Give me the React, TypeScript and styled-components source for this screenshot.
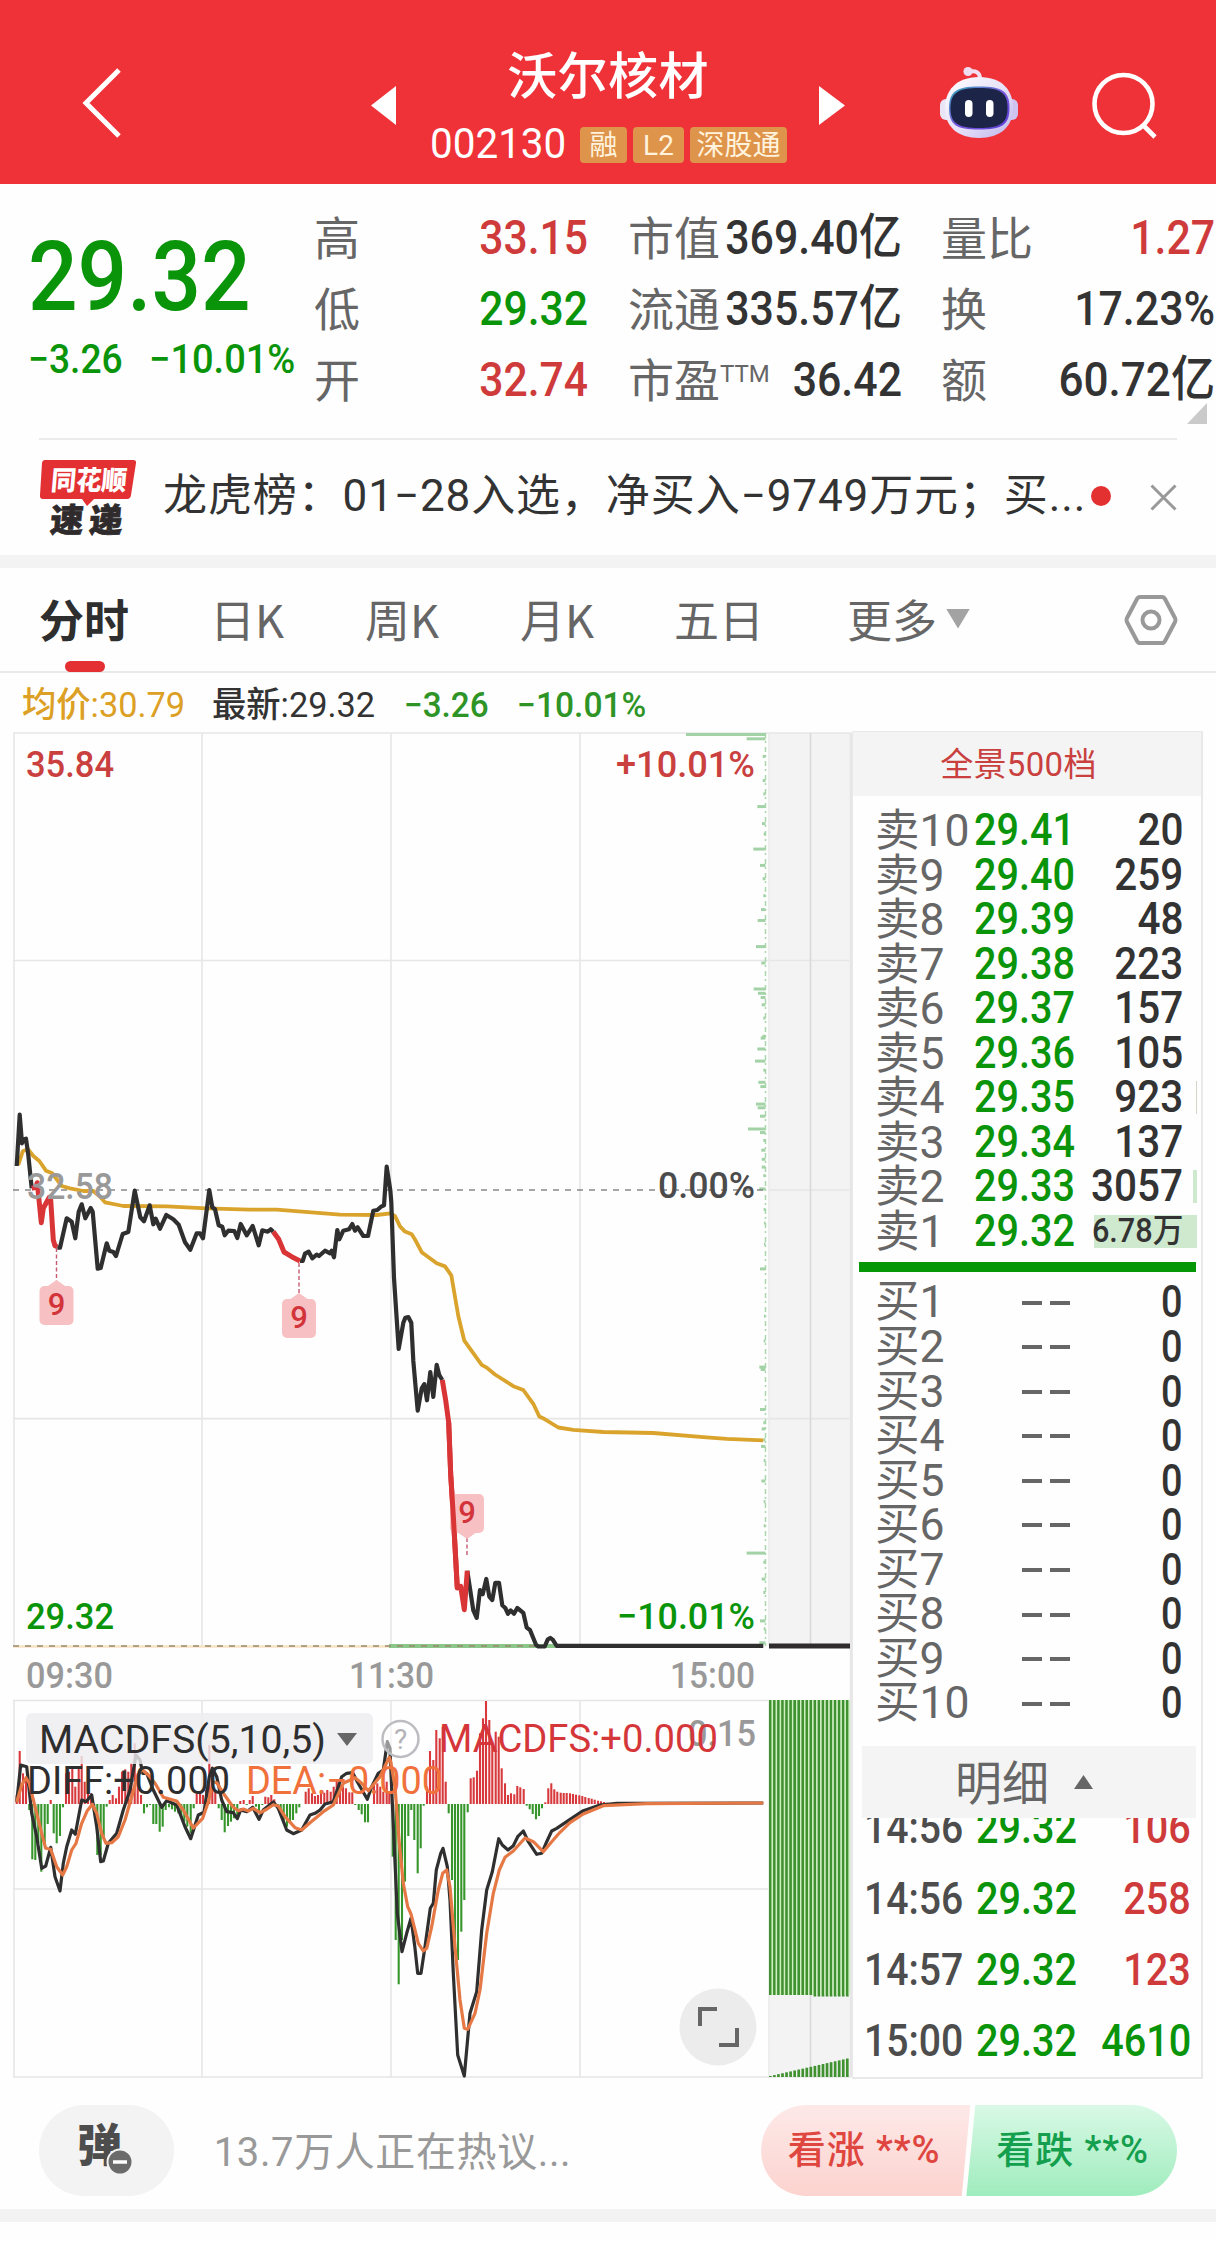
import React from "react";
import styled, { createGlobalStyle } from "styled-components";

const RED = "#c9403e";
const GREEN = "#0a940a";
const INK = "#333333";
const MUTE = "#666666";
const FONT = 'Roboto, "Noto Sans CJK SC", sans-serif';
const CJK = '"Noto Sans CJK SC", sans-serif';

const Global = createGlobalStyle`
  * { box-sizing: border-box; }
  body { margin: 0; background: #fff; font-family: ${FONT}; }
`;

const Page = styled.div`
  width: 1216px;
  height: 2241px;
  overflow: hidden;
  background: #fefefe;
  display: flex;
  flex-direction: column;
`;

/* Condensed figures, squeezed towards the side they are aligned to. */
const Figure = styled.span<{
  $size: number;
  $color?: string;
  $squeeze?: number;
  $from?: string;
  $weight?: number;
}>`
  display: inline-block;
  white-space: nowrap;
  font-size: ${(p) => p.$size}px;
  font-weight: ${(p) => p.$weight ?? 500};
  color: ${(p) => p.$color ?? INK};
  transform: scaleX(${(p) => p.$squeeze ?? 0.92});
  transform-origin: ${(p) => p.$from ?? "left"} center;
`;

/* ---------- header ---------- */
const Header = styled.header`
  height: 184px;
  flex: none;
  background: #ef3138;
  display: grid;
  grid-template-columns: 365px 486px 365px;
  color: #fff;
`;
const HeaderSide = styled.div<{ $left: number; $top: number; $gap?: number }>`
  display: flex;
  align-items: flex-start;
  gap: ${(p) => p.$gap ?? 0}px;
  padding: ${(p) => p.$top}px 0 0 ${(p) => p.$left}px;
`;
const TitleBlock = styled.div`
  display: grid;
  grid-template-columns: 37px 1fr 37px;
`;
const Arrow = styled.svg`
  width: 37px;
  height: 50px;
  margin-top: 80px;
`;
const TitleStack = styled.div`
  display: flex;
  flex-direction: column;
  align-items: center;
  padding-top: 40px;
`;
const Title = styled.h1`
  margin: 0;
  font: 500 50px/64px ${CJK};
  letter-spacing: 0.4px;
`;
const CodeLine = styled.div`
  width: 358px;
  height: 36px;
  margin-top: 23px;
  display: flex;
  align-items: center;
  line-height: 36px;
`;
const CodeBox = styled.div`
  width: 151px;
  flex: none;
  padding: 5px 0 0 1px;
`;
const Badge = styled.span<{ $w: number }>`
  width: ${(p) => p.$w}px;
  flex: none;
  height: 36px;
  margin-right: 6px;
  border-radius: 4px;
  background: #df944b;
  color: #fff3dd;
  font: 400 28px/37px ${FONT};
  text-align: center;
  white-space: nowrap;
`;

/* ---------- quote ---------- */
const Quote = styled.section`
  height: 254px;
  flex: none;
  padding: 18px 0 0 28px;
  display: grid;
  grid-template-columns: 288px 272px 271px 272px;
`;
const PriceBlock = styled.div`
  padding-top: 25px;
`;
const PriceLine = styled.div`
  height: 100px;
  line-height: 100px;
`;
const ChangeLine = styled.div`
  display: flex;
  height: 50px;
  margin-top: 8px;
  line-height: 50px;
`;
const ChangeCell = styled.div<{ $w: number }>`
  width: ${(p) => p.$w}px;
`;
const StatColumn = styled.div<{ $gap?: number }>`
  margin-left: ${(p) => p.$gap ?? 0}px;
  width: 272px;
`;
const Stat = styled.div`
  height: 71px;
  display: flex;
  align-items: center;
  line-height: 71px;
`;
const StatLabel = styled.span`
  height: 71px;
  font: 400 46px/66px ${CJK};
  color: ${MUTE};
  white-space: nowrap;
  flex: none;
  width: 96px;
  margin-left: -2px;
  sup {
    font: 400 24px/24px Roboto, sans-serif;
    vertical-align: 15px;
  }
`;
const StatValue = styled.div`
  flex: 1;
  min-width: 0;
  display: flex;
  justify-content: flex-end;
  height: 71px;
`;
const CornerRow = styled.div`
  height: 21px;
  margin-top: -12px;
  display: flex;
  justify-content: flex-end;
  padding-right: 8px;
`;

/* ---------- news ---------- */
const News = styled.section`
  height: 117px;
  flex: none;
  margin: 0 39px;
  border-top: 2px solid #ebebeb;
  display: flex;
  align-items: center;
`;
const NewsLogo = styled.svg`
  width: 100px;
  height: 84px;
  flex: none;
`;
const NewsText = styled.div`
  width: 927px;
  margin-left: 24px;
  padding-bottom: 4px;
  font: 400 44px/60px ${FONT};
  letter-spacing: 0.9px;
  color: #333;
  white-space: nowrap;
`;
const Dot = styled.i`
  width: 20px;
  height: 20px;
  margin: 0 0 3px 2px;
  border-radius: 50%;
  background: #e33030;
  flex: none;
`;
const Close = styled.svg`
  width: 27px;
  height: 27px;
  margin-left: 39px;
  flex: none;
`;
const Band = styled.div`
  height: 13px;
  flex: none;
  background: #f3f3f3;
`;

/* ---------- tabs ---------- */
const Tabs = styled.nav`
  height: 105px;
  flex: none;
  border-bottom: 2px solid #e9e9e9;
  display: grid;
  grid-template-columns: 171px 155px 155px 154px 173px 276px 1fr;
  padding-left: 39px;
`;
const Tab = styled.div<{ $active?: boolean }>`
  display: flex;
  flex-direction: column;
  font: ${(p) => (p.$active ? 700 : 400)} 45px/60px ${CJK};
  color: ${(p) => (p.$active ? "#2e2e2e" : MUTE)};
  white-space: nowrap;
`;
const TabLabel = styled.span`
  height: 93px;
  padding-top: 8px;
  display: flex;
  align-items: center;
`;
const Marker = styled.i`
  width: 40px;
  height: 11px;
  margin-left: 26px;
  border-radius: 6px;
  background: #e53033;
`;
const Caret = styled.i<{ $w: number; $h: number; $up?: boolean; $color: string; $gap: number }>`
  width: ${(p) => p.$w}px;
  height: ${(p) => p.$h}px;
  margin-left: ${(p) => p.$gap}px;
  background: ${(p) => p.$color};
  clip-path: ${(p) => (p.$up ? "polygon(50% 0, 100% 100%, 0 100%)" : "polygon(0 0, 100% 0, 50% 100%)")};
`;
const Settings = styled.svg`
  width: 56px;
  height: 56px;
  margin: 24px 0 0 0;
`;

const Legend = styled.div`
  height: 58px;
  flex: none;
  padding: 8px 0 0 22px;
  display: grid;
  grid-template-columns: 190px 192px 113px 200px;
  line-height: 50px;
`;

/* ---------- body ---------- */
const Body = styled.main`
  height: 1349px;
  flex: none;
  display: flex;
`;
const Chart = styled.svg`
  width: 852px;
  height: 1349px;
  flex: none;
  font-family: ${FONT};
`;
const Book = styled.aside`
  width: 351px;
  height: 1348px;
  border: solid #e9e9e9;
  border-width: 1px 2px 2px 1px;
`;
const BookHead = styled.div`
  height: 64px;
  background: #f4f4f4;
  color: ${RED};
  font: 400 33px/65px ${FONT};
  text-align: center;
  padding-right: 17px;
  letter-spacing: 0.3px;
`;
const Side = styled.div<{ $top: number }>`
  padding-top: ${(p) => p.$top}px;
`;
const Level = styled.div`
  height: 44.55px;
  display: grid;
  grid-template-columns: 99px 112px 97px 14px;
  padding-left: 22px;
  line-height: 44.55px;
`;
const LevelLabel = styled.span`
  font-size: 44.5px;
  font-weight: 400;
  color: ${MUTE};
  white-space: nowrap;
`;
const Qty = styled.div<{ $fill?: boolean }>`
  text-align: right;
  display: flex;
  justify-content: flex-end;
  align-items: center;
  height: ${(p) => (p.$fill ? 33 : 44.55)}px;
  margin: ${(p) => (p.$fill ? "5px 0 0 8px" : "0")};
  background: ${(p) => (p.$fill ? "#cfe9cf" : "none")};
`;
const Depth = styled.i<{ $w: number; $color: string }>`
  justify-self: end;
  width: ${(p) => p.$w}px;
  height: 33px;
  margin-top: 5px;
  background: ${(p) => p.$color};
`;
const Dashes = styled.span`
  display: flex;
  justify-content: flex-end;
  align-items: center;
  gap: 8px;
  padding-right: 16px;
  font-size: 0;
  i {
    width: 20px;
    height: 4px;
    background: #666;
  }
`;
const Split = styled.div`
  height: 10px;
  margin: 8px 5px 0 6px;
  background: #069706;
`;
const DetailHead = styled.div`
  height: 72px;
  margin: 20px 5px 0 9px;
  background: #f4f4f4;
  display: flex;
  align-items: center;
  padding-left: 93px;
  font: 400 47px/68px ${CJK};
  color: ${MUTE};
`;
const DetailLabel = styled.span`
  height: 72px;
`;
const Trades = styled.div`
  height: 259px;
  overflow: hidden;
`;
const TradeList = styled.div`
  margin-top: -26px;
`;
const Trade = styled.div`
  height: 71px;
  display: grid;
  grid-template-columns: 112px 111px 104px;
  padding-left: 11px;
  line-height: 71px;
`;
const Right = styled.div`
  display: flex;
  justify-content: flex-end;
`;

/* ---------- footer ---------- */
const Footer = styled.footer`
  height: 129px;
  flex: none;
  padding: 25px 39px 0;
  display: flex;
`;
const Bullet = styled.div`
  width: 135px;
  height: 91px;
  border-radius: 46px;
  background: #f3f3f3;
  display: flex;
  justify-content: center;
`;
const BulletIcon = styled.svg`
  width: 60px;
  height: 60px;
  margin: 13px 0 0 0;
`;
const Talk = styled.div`
  width: 588px;
  padding-left: 40px;
  font: 400 40px/95px ${FONT};
  letter-spacing: 0.6px;
  color: #999;
  white-space: nowrap;
`;
const Votes = styled.div`
  width: 417px;
  height: 91px;
  display: flex;
  border-radius: 46px;
  overflow: hidden;
`;
const Vote = styled.div<{ $rise?: boolean }>`
  width: ${(p) => (p.$rise ? 210 : 212)}px;
  margin-left: ${(p) => (p.$rise ? 0 : -5)}px;
  padding-left: ${(p) => (p.$rise ? 27 : 31)}px;
  background: ${(p) =>
    p.$rise ? "linear-gradient(#fde9e8, #fcd3cf)" : "linear-gradient(#d9f9e6, #9fecbd)"};
  clip-path: ${(p) =>
    p.$rise
      ? "polygon(0 0, 100% 0, 201px 100%, 0 100%)"
      : "polygon(10px 0, 100% 0, 100% 100%, 1px 100%)"};
  color: ${(p) => (p.$rise ? "#df463f" : "#149f4e")};
  font: 500 38px/91px ${FONT};
  letter-spacing: 0.9px;
  white-space: nowrap;
`;

/* ---------- chart data ---------- */
type Pt = [number, number];
const parse = (s: string, x0: number, y0: number, kx: number, ky: number): Pt[] =>
  s
    .trim()
    .split(/\s+/)
    .map((p) => {
      const [x, y] = p.split(",").map(Number);
      return [x0 + x / kx, y0 + y / ky];
    });
const line = (...parts: Pt[][]) =>
  parts
    .flat()
    .map(([x, y]) => `${x.toFixed(1)},${y.toFixed(1)}`)
    .join(" ");
const am = (s: string) => parse(s, 0, 1080, 3, 3);
const pm = (s: string) => parse(s, 370, 1130, 3, 2.904);
const mAm = (s: string) => parse(s, 0, 1600, 3, 3);
const mPm = (s: string) => parse(s, 370, 1640, 3, 3);

const priceBlack = [
  line(am("50,258 59,104 66,190 73,178 78,176 85,225 95,325")),
  line(
    am(`172,503 180,503 190,460 200,415 215,425 226,475 236,395 245,373 256,415 272,384 278,395 293,566
    302,564 320,490 328,512 340,516 348,528 368,462 385,456 404,332 421,412 432,424 449,376 460,433 467,416
    480,446 499,405 520,418 536,434 555,487 571,509 590,460 600,460 609,475 628,330 637,382 645,388 656,436
    667,440 674,466 685,452 703,453 712,474 722,432 740,466 758,438 776,496 787,451 803,455 812,448 820,455`)
  ),
  line(
    am(`900,543 908,543 915,521 926,515 937,535 950,524 957,528 975,512 990,520 995,512 1002,532 1012,450
    1018,478 1030,452 1047,448 1057,432 1065,452 1073,442 1090,468 1104,468 1120,392 1132,390 1143,380
    1152,376 1160,260 1171,330`),
    pm(`64,210 72,430 86,636 100,560 106,545 115,543 124,560 130,670 143,815 155,750 163,738 171,785 181,703
    190,775 200,682 208,712 217,726`)
  ),
  line(
    pm(`292,1280 310,1395 320,1417 330,1336 338,1348 349,1304 358,1355 367,1365 376,1315 387,1315 397,1380
    406,1388 414,1405 422,1395 432,1405 442,1388 460,1402 470,1445 480,1452 498,1495 505,1500 524,1500
    533,1480 541,1475 548,1480 560,1498 1180,1498`)
  ),
];
const priceRed = [
  line(am("95,325 108,322 112,308 124,428 130,385 148,352 152,360 160,480 165,497 172,500")),
  line(am("820,455 836,478 852,516 875,530 900,543")),
  line(pm("217,726 227,785 236,850 242,1000 250,1120 262,1330 272,1325 283,1393 292,1280")),
];
const average = line(
  am(`55,255 68,214 84,208 100,228 118,243 138,272 157,280 185,318 210,325 250,333 280,333 300,350 315,367
  370,378 500,379 620,385 750,389 830,389 1020,404 1130,405 1172,400`),
  pm(`75,250 90,280 105,295 125,303 135,318 155,355 200,387 225,396 244,422 265,540 283,612 335,682 350,690
  375,710 430,744 460,755 490,795 508,832 525,840 565,864 610,871 700,877 850,880 1000,892 1070,897 1180,901`)
);
const diff = line(
  mAm(`50,606 62,495 80,500 95,640 110,710 125,805 137,798 152,742 165,830 180,873 190,790 200,740 215,690
  226,703 245,600 258,605 275,585 290,680 302,785 310,783 325,730 350,700 370,630 390,570 408,465 420,480
  428,520 440,520 460,570 485,622 500,602 530,615 555,680 572,716 595,645 612,637 628,530 637,505 650,530
  665,600 680,635 700,638 712,656 722,630 740,635 758,622 777,658 790,630 820,606 835,625 860,690 880,701
  905,690 930,645 945,640 960,630 975,612 1000,605 1025,530 1040,520 1058,518 1072,545 1102,598 1115,560
  1135,520 1150,510 1162,425 1170,445`),
  mPm(`62,380 72,600 82,820 96,935 110,880 123,835 135,925 143,1000 153,1000 165,920 181,805 190,790 199,690
  212,640 219,625 232,680 240,780 250,1000 263,1245 283,1308 300,1120 320,1055 335,870 350,750 367,695
  386,596 397,615 414,630 430,617 443,590 460,573 475,605 500,643 515,640 530,605 545,573 560,565 590,545
  640,512 690,495 740,490 1180,489`)
);
const dea = line(
  mAm(`50,606 65,555 78,533 88,550 110,640 125,700 137,745 152,748 170,800 188,825 200,800 215,750 228,730
  245,670 262,632 277,613 290,640 305,700 318,730 335,728 355,710 375,660 395,590 412,530 425,508 445,525
  465,550 490,592 530,603 550,630 580,684 608,655 625,605 640,545 650,548 670,580 700,622 715,632 730,627
  745,633 760,625 780,638 800,628 820,614 835,618 855,650 885,683 905,690 930,668 970,635 1000,615 1030,550
  1065,533 1085,550 1105,572 1140,530 1168,472`),
  mPm(`62,365 68,400 75,440 87,600 100,730 113,800 123,822 145,910 160,933 170,925 185,860 205,750 218,700
  230,690 240,740 255,920 270,1080 283,1165 293,1168 315,1120 330,1050 350,880 370,760 388,690 405,652
  430,633 465,594 490,605 520,635 545,605 570,577 600,548 640,522 700,497 830,491 1180,489`)
);
const bars: Pt[] = [
  ...mAm(`50,585 59,453 69,520 78,540 88,630 97,778 106,780 115,730 124,815 134,735 143,672 152,600 161,700
  170,730 180,708 189,622 198,520 207,515 217,500 226,560 236,500 245,468 254,545 264,545 273,580 283,630
  292,765 302,765 311,715 320,620 329,600 338,585 348,595 357,560 366,515 376,508 385,515 394,490 404,430
  413,520 423,585 432,640 441,622 450,615 460,672 469,672 479,695 488,680 497,630 507,622 516,628 525,635
  535,640 544,655 553,665 562,680 572,700 581,625 590,580 600,580 609,585 618,570 628,435 637,500 646,570
  656,625 665,660 674,697 684,678 693,665 702,655 712,650 721,603 731,600 740,615 749,600 758,588 768,620
  777,640 787,615 796,590 805,592 814,585 823,598 833,625 842,640 851,665 861,680 870,665 879,660 889,640
  898,622 917,575 926,565 936,580 945,588 954,585 963,575 973,578 982,570 992,575 1001,560 1010,540 1020,555
  1029,560 1038,565 1048,577 1057,577 1066,615 1076,630 1085,643 1095,667 1104,667 1122,555 1132,550
  1141,560 1150,575 1160,545 1168,575`),
  ...mPm(`68,650 77,900 86,1033 96,900 105,725 115,588 124,510 133,600 143,700 152,625 161,497 171,440
  180,333 190,360 199,270 209,295 218,260 227,425 236,520 246,720 255,900 264,960 274,875 283,780 293,517
  302,415 311,412 321,392 330,280 339,235 348,183 358,240 367,310 377,275 386,290 395,385 405,430 414,465
  423,460 433,463 442,438 451,442 461,447 470,497 479,508 488,522 498,538 507,528 516,505 526,487 535,445
  544,430 553,448 562,455 572,458 581,459 590,459 600,460 609,462 618,464 628,466 637,468 646,471 656,474
  665,476 674,479 684,482 693,484 702,486 712,488 721,489`),
];
const profile = parse(
  `48,24 230,31 262,143 276,171 250,213 270,240 278,262 273,313 263,331 258,374 274,401 251,444 264,451
  272,458 275,470 272,525 262,543 255,563 265,598 271,605 258,634 263,640 270,654 234,675 270,681 274,710
  275,725 275,738 268,774 270,906 268,1068 272,1072 270,1138 275,1170 273,1199 274,1256 230,1375 275,1418
  270,1487 268,1523 278,60 278,100 280,122 281,188 280,290 280,492 277,522 280,578 280,694 280,752 281,808
  282,830 282,865 282,984 281,1025 280,1160 280,1188 281,1222 281,1290 281,1330 280,1390 280,1440 281,1500`,
  670,
  720,
  3,
  1.6505
);
const GRID = "#e6e6e6";

const Label = ({
  x, y, w, size = 37, color, weight = 500, children,
}: { x: number; y: number; w: number; size?: number; color: string; weight?: number; children: string }) => (
  <text x={x} y={y} textLength={w} lengthAdjust="spacingAndGlyphs" fontSize={size} fontWeight={weight} fill={color}>
    {children}
  </text>
);

const Nine = ({ x, top, tip }: { x: number; top: number; tip: "up" | "down" }) => (
  <g>
    <rect x={x - 17} y={top} width={34} height={39} rx={5} fill="#f7c1c3" />
    <path
      d={tip === "up" ? `M${x - 10} ${top + 1}L${x} ${top - 6}L${x + 10} ${top + 1}Z` : `M${x - 10} ${top + 38}L${x} ${top + 45}L${x + 10} ${top + 38}Z`}
      fill="#f7c1c3"
    />
    <text x={x} y={top + 29} textAnchor="middle" fontSize={31} fontWeight={500} fill="#d2343a">
      9
    </text>
  </g>
);

const Charts = () => (
  <Chart viewBox="0 731 852 1349">
    <rect x={769} y={733} width={82} height={914} fill="#f3f3f3" />
    <rect x={769} y={1700} width={82} height={377} fill="#f3f3f3" />
    <g stroke={GRID} strokeWidth={1.6}>
      {[14, 202, 391, 580].map((x) => (
        <React.Fragment key={x}>
          <path d={`M${x} 733V1646`} />
          <path d={`M${x} 1700V2077`} />
        </React.Fragment>
      ))}
      <path d="M13 733H851M13 960.5H849M13 1418.6H849M769 1190H849M13 1700.5H769M13 1889H769M13 2077H851" />
      <path d="M810.5 733V1646M810.5 1700V2077" stroke="#d9d9d9" />
      <path d="M769 733V1646M769 1700V2077" stroke="#e9ece9" />
      <path d="M851 733V2077" strokeWidth={2.4} />
    </g>

    <path d="M765.5 733V1646" stroke="#a9d8ac" strokeWidth={1.5} strokeDasharray="5 3 2 4" />
    {profile.map(([x, y], i) => (
      <path key={i} d={`M${x} ${y.toFixed(1)}H765.5`} stroke="#a3d2a6" strokeWidth={3} />
    ))}

    <path d="M13 1190H766" stroke="#888" strokeWidth={1.5} strokeDasharray="6 6" />
    <path d="M13 1646.5H390" stroke="#f7e3c4" strokeWidth={2.5} />
    <path d="M389 1646H560" stroke="#8cc78a" strokeWidth={4} />
    <path d="M13 1646H540" stroke="#9a8a70" strokeWidth={1.5} strokeDasharray="6 6" />

    <Label x={26} y={777} w={88} color={RED}>35.84</Label>
    <Label x={616} y={777} w={139} color={RED}>+10.01%</Label>

    <g fill="none" strokeLinejoin="round" strokeLinecap="butt">
      <polyline points={average} stroke="#daa32c" strokeWidth={3.8} />
      {priceBlack.map((p) => (
        <polyline key={p} points={p} stroke="#2f2f2f" strokeWidth={4.2} />
      ))}
      {priceRed.map((p) => (
        <polyline key={p} points={p} stroke="#d93537" strokeWidth={5} />
      ))}
      <path d="M769 1646H850" stroke="#2f2b2c" strokeWidth={5} />
    </g>
    <Label x={27} y={1199} w={86} color="#999999">32.58</Label>
    <Label x={658} y={1198} w={97} color="#4b4b4b">0.00%</Label>
    <Label x={26} y={1629} w={88} color={GREEN}>29.32</Label>
    <Label x={617} y={1629} w={138} color={GREEN}>−10.01%</Label>

    <g stroke="#c55b70" strokeWidth={1.4} strokeDasharray="4 2.5">
      <path d="M56.5 1248V1282M299 1263V1295M467 1538V1556" />
    </g>
    <Nine x={56.5} top={1286} tip="up" />
    <Nine x={299} top={1299} tip="up" />
    <Nine x={467} top={1494} tip="down" />
    <polyline points={line(pm("236,850 242,1000 250,1120 262,1330"))} fill="none" stroke="#d93537" strokeWidth={5} />

    <Label x={26} y={1688} w={87} color="#999999">09:30</Label>
    <Label x={349} y={1688} w={85} color="#999999">11:30</Label>
    <Label x={670} y={1688} w={85} color="#999999">15:00</Label>

    <Label x={688} y={1746} w={68} color="#999999">0.15</Label>
    {bars.map(([x, y], i) => (
      <path key={i} d={`M${x.toFixed(1)} 1804V${y.toFixed(1)}`} stroke={y < 1804 ? "#d8393c" : "#36962b"} strokeWidth={2.1} />
    ))}
    <g fill="none" strokeLinejoin="round" strokeLinecap="butt">
      <polyline points={diff} stroke="#2f2f2f" strokeWidth={3.2} />
      <polyline points={dea} stroke="#e57844" strokeWidth={3.2} />
    </g>

    <rect x={26} y={1713} width={347} height={51} rx={6} fill="#ededf0" fillOpacity={0.82} />
    <Label x={39} y={1753} w={287} size={39} weight={400} color="#2e2e2e">MACDFS(5,10,5)</Label>
    <path d="M337 1733H357L347 1746Z" fill="#666" />
    <circle cx={400.5} cy={1739} r={18} fill="#fff" fillOpacity={0.5} stroke="#bdbdc1" strokeWidth={2.5} />
    <text x={400.5} y={1749} textAnchor="middle" fontSize={28} fill="#b3b3b7">?</text>
    <Label x={27} y={1794} w={203} size={39} weight={450} color="#2e2e2e">DIFF:+0.000</Label>
    <Label x={246} y={1793.5} w={197} size={39} weight={450} color="#f0713b">DEA:−0.000</Label>
    <Label x={439} y={1752} w={279} size={39} weight={450} color="#d5363a">MACDFS:+0.000</Label>

    {Array.from({ length: 20 }, (_, i) => (
      <g key={i} fill="#3f922f">
        <rect x={769 + i * 4.05} y={1700} width={2.7} height={i > 10 ? 296.5 : 295} />
        <rect x={769 + i * 4.05} y={2076 - i * 0.92} width={2.7} height={1 + i * 0.92} />
        <rect x={771.7 + i * 4.05} y={1700} width={1.3} height={295} fill="#cdf2be" />
      </g>
    ))}

    <circle cx={718} cy={2027} r={38.5} fill="#ececec" />
    <path d="M717 2009H700V2026M719 2045H737V2028" fill="none" stroke="#666" strokeWidth={4} />
  </Chart>
);

const sells: [string, string, string][] = [
  ["卖10", "29.41", "20"], ["卖9", "29.40", "259"], ["卖8", "29.39", "48"], ["卖7", "29.38", "223"],
  ["卖6", "29.37", "157"], ["卖5", "29.36", "105"], ["卖4", "29.35", "923"], ["卖3", "29.34", "137"],
  ["卖2", "29.33", "3057"], ["卖1", "29.32", "6.78万"],
];
const depth: Record<string, [number, string]> = {
  卖4: [1, "#d6d6c6"],
  卖2: [4, "#cfe9cf"],
  卖1: [14, "#cfe9cf"],
};
const trades: [string, string, boolean][] = [
  ["14:56", "106", true], ["14:56", "258", true], ["14:57", "123", true], ["15:00", "4610", false],
];

const OrderBook = () => (
  <Book>
    <BookHead>全景500档</BookHead>
    <Side $top={13}>
      {sells.map(([name, price, qty]) => {
        const small = qty.includes("万");
        const d = depth[name];
        return (
          <Level key={name}>
            <LevelLabel>{name}</LevelLabel>
            <Figure $size={43.5} $squeeze={0.91} $color={GREEN}>{price}</Figure>
            <Qty $fill={small}>
              <Figure $size={small ? 33 : 43.5} $squeeze={0.93} $from="right">{qty}</Figure>
            </Qty>
            {d && <Depth $w={d[0]} $color={d[1]} />}
          </Level>
        );
      })}
    </Side>
    <Split />
    <Side $top={8}>
      {Array.from({ length: 10 }, (_, i) => (
        <Level key={i}>
          <LevelLabel>买{i + 1}</LevelLabel>
          <Dashes><i /><i /></Dashes>
          <Qty><Figure $size={45} $squeeze={0.84} $from="right">0</Figure></Qty>
        </Level>
      ))}
    </Side>
    <DetailHead><DetailLabel>明细</DetailLabel><Caret $w={19} $h={14} $gap={25} $up $color="#666" /></DetailHead>
    <Trades>
      <TradeList>
        {trades.map(([time, qty, up], i) => (
          <Trade key={i}>
            <Figure $size={45} $squeeze={0.87} $color="#4d4d4d">{time}</Figure>
            <Figure $size={45} $squeeze={0.88} $color={GREEN}>29.32</Figure>
            <Right><Figure $size={45} $squeeze={0.88} $from="right" $color={up ? "#cf3b3b" : GREEN}>{qty}</Figure></Right>
          </Trade>
        ))}
      </TradeList>
    </Trades>
  </Book>
);

type StatRow = [React.ReactNode, string, string];
const stats: StatRow[][] = [
  [["高", "33.15", "#cf3b3b"], ["低", "29.32", GREEN], ["开", "32.74", "#cf3b3b"]],
  [["市值", "369.40亿", INK], ["流通", "335.57亿", INK], [<>市盈<sup>TTM</sup></>, "36.42", INK]],
  [["量比", "1.27", "#cf3b3b"], ["换", "17.23%", INK], ["额", "60.72亿", INK]],
];

export default function App() {
  return (
    <Page>
      <Global />
      <Header>
        <HeaderSide $left={80} $top={66}>
          <svg width="46" height="74" viewBox="0 0 46 74">
            <path d="M39 4L6 37L39 70" fill="none" stroke="#fff" strokeWidth="5" />
          </svg>
        </HeaderSide>
        <TitleBlock>
          <Arrow viewBox="0 0 37 50"><path d="M31 6V45L6 25.5Z" fill="#fff" /></Arrow>
          <TitleStack>
            <Title>沃尔核材</Title>
            <CodeLine>
              <CodeBox><Figure $size={43} $squeeze={0.94} $weight={450} $color="#fff">002130</Figure></CodeBox>
              <Badge $w={47}>融</Badge>
              <Badge $w={51}>L2</Badge>
              <Badge $w={97}>深股通</Badge>
            </CodeLine>
          </TitleStack>
          <Arrow viewBox="0 0 37 50"><path d="M5 6V45L31 25.5Z" fill="#fff" /></Arrow>
        </TitleBlock>
        <HeaderSide $left={85} $top={60} $gap={66}>
          <svg width="88" height="84" viewBox="936 60 88 84">
            <defs>
              <linearGradient id="shell" x1="0" y1="0" x2="1" y2="1">
                <stop offset="0" stopColor="#fff" />
                <stop offset="0.6" stopColor="#e2dcf7" />
                <stop offset="1" stopColor="#bdb4ea" />
              </linearGradient>
              <linearGradient id="visor" x1="0" y1="0" x2="1" y2="1">
                <stop offset="0" stopColor="#35aebb" />
                <stop offset="0.5" stopColor="#7a58dd" />
                <stop offset="1" stopColor="#5a3ed6" />
              </linearGradient>
            </defs>
            <path d="M968 72Q980 69 980 79" fill="none" stroke="#f3dff0" strokeWidth="4" />
            <circle cx="968" cy="71.5" r="4.6" fill="#efdcf0" />
            <rect x="940" y="99" width="14" height="21" rx="6" fill="#e9e4f6" />
            <rect x="1004" y="99" width="14" height="21" rx="6" fill="#cfc4f0" />
            <path d="M979 77C1003 77 1013 91 1013 108C1013 127 1000 138 979 138C958 138 945 127 945 108C945 91 956 77 979 77Z" fill="url(#shell)" />
            <path d="M979 86.500C1003 86.500 1009.500 92 1009.500 108C1009.500 125 1002 129.500 979 129.500C956 129.500 949 125 949 108C949 92 956 86.500 979 86.500Z" fill="url(#visor)" />
            <path d="M979 88C1001 88 1007.500 93 1007.500 108C1007.500 123.500 1000 128 979 128C958 128 950.500 123.500 950.500 108C950.500 93 958 88 979 88Z" fill="#1c2547" />
            <rect x="965" y="100" width="7.500" height="17" rx="3.700" fill="#fff" />
            <rect x="986" y="100" width="7.500" height="17" rx="3.700" fill="#fff" />
          </svg>
          <svg width="76" height="84" viewBox="1090 60 76 84">
            <circle cx="1123.500" cy="104" r="29" fill="none" stroke="#fff" strokeWidth="4.600" />
            <path d="M1143 125L1155 137" stroke="#fff" strokeWidth="4.600" />
          </svg>
        </HeaderSide>
      </Header>

      <Quote>
        <PriceBlock>
          <PriceLine><Figure $size={97} $squeeze={0.9} $color={GREEN}>29.32</Figure></PriceLine>
          <ChangeLine>
            <ChangeCell $w={121}><Figure $size={40} $squeeze={0.93} $color={GREEN}>−3.26</Figure></ChangeCell>
            <ChangeCell $w={150}><Figure $size={40} $squeeze={0.95} $color={GREEN}>−10.01%</Figure></ChangeCell>
          </ChangeLine>
        </PriceBlock>
        {stats.map((col, c) => (
          <StatColumn key={c} $gap={c * 42}>
            {col.map(([label, value, color], r) => (
              <Stat key={r}>
                <StatLabel>{label}</StatLabel>
                <StatValue>
                  <Figure $size={49} $squeeze={c === 0 ? 0.87 : value === "60.72亿" ? 0.9 : 0.875} $from="right" $color={color}>
                    {value}
                  </Figure>
                </StatValue>
              </Stat>
            ))}
            {c === 2 && (
              <CornerRow>
                <svg width="20" height="21"><path d="M20 0V21H0Z" fill="#cacaca" /></svg>
              </CornerRow>
            )}
          </StatColumn>
        ))}
      </Quote>

      <News>
        <NewsLogo viewBox="39 453 100 84">
          <g transform="translate(0 -2)">
            <path d="M45 459H133Q136.500 459 136 462L131 494Q130.500 498 127 498H94L87 505L82 498H43Q39.500 498 40 494L42 462Q42.500 459 45 459Z" fill="#e33032" />
            <g fontFamily="Noto Sans CJK SC" fontWeight={900} transform="skewX(-5)">
              <text x="93" y="489" fontSize="27" fill="#fff" textLength="76" lengthAdjust="spacingAndGlyphs">同花顺</text>
              <text x="96" y="531" fontSize="33" fill="#2f2b2c" stroke="#2f2b2c" strokeWidth="0.800">速</text>
              <text x="135" y="531" fontSize="33" fill="#2f2b2c" stroke="#2f2b2c" strokeWidth="0.800">递</text>
            </g>
          </g>
        </NewsLogo>
        <NewsText>龙虎榜：01−28入选，净买入−9749万元；买...</NewsText>
        <Dot />
        <Close viewBox="0 0 27 27"><path d="M1.500 1.500L25.500 25.500M25.500 1.500L1.500 25.500" stroke="#999" strokeWidth="3" /></Close>
      </News>
      <Band />

      <Tabs>
        <Tab $active><TabLabel>分时</TabLabel><Marker /></Tab>
        <Tab><TabLabel>日K</TabLabel></Tab>
        <Tab><TabLabel>周K</TabLabel></Tab>
        <Tab><TabLabel>月K</TabLabel></Tab>
        <Tab><TabLabel>五日</TabLabel></Tab>
        <Tab><TabLabel>更多<Caret $w={24} $h={20} $gap={9} $color="#a3a3a3" /></TabLabel></Tab>
        <Settings viewBox="0 0 56 56">
          <path d="M17 5H39Q41 5 42 7L52 26Q53 28 52 30L42 49Q41 51 39 51H17Q15 51 14 49L4 30Q3 28 4 26L14 7Q15 5 17 5Z" fill="none" stroke="#999" strokeWidth="4" />
          <circle cx="28" cy="28" r="8.500" fill="none" stroke="#999" strokeWidth="4" />
        </Settings>
      </Tabs>

      <Legend>
        <Figure $size={35} $squeeze={0.98} $weight={450} $color="#dca024">均价:30.79</Figure>
        <Figure $size={35} $squeeze={0.98} $weight={450}>最新:29.32</Figure>
        <Figure $size={35} $squeeze={0.95} $color="#2f9426">−3.26</Figure>
        <Figure $size={35} $squeeze={0.96} $color="#2f9426">−10.01%</Figure>
      </Legend>

      <Body>
        <Charts />
        <OrderBook />
      </Body>

      <Footer>
        <Bullet>
          <BulletIcon viewBox="0 0 60 60">
            <text x="1" y="44" fontSize="45" fontWeight={900} fontFamily="Noto Sans CJK SC" fill="#4d4d4d">弹</text>
            <circle cx="44" cy="44" r="12.500" fill="#6b6b6b" stroke="#f3f3f3" strokeWidth="2" />
            <path d="M37 44H51" stroke="#fff" strokeWidth="3.500" />
          </BulletIcon>
        </Bullet>
        <Talk>13.7万人正在热议...</Talk>
        <Votes>
          <Vote $rise>看涨 **%</Vote>
          <Vote>看跌 **%</Vote>
        </Votes>
      </Footer>
      <Band />
    </Page>
  );
}
